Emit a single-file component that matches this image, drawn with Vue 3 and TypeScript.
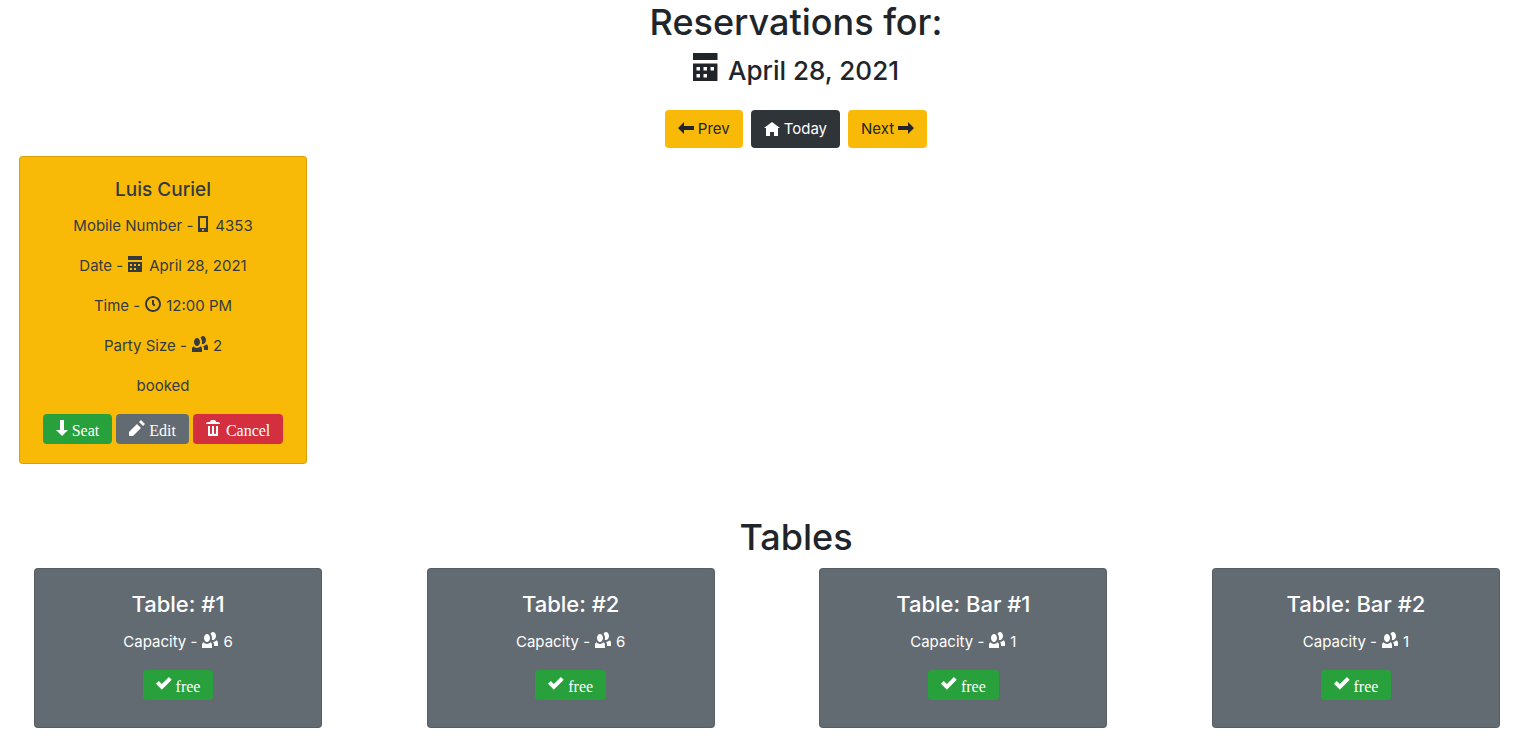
<script setup lang="ts">
import { defineComponent, h } from 'vue'

interface Glyph {
  width: number
  path: string
  dy?: number
}

const glyphs: Record<string, Glyph> = {
  calendar: {
    width: 8,
    path: 'M0 0v2h7v-2h-7zm0 3v4.91c0 .05.04.09.09.09h6.81c.05 0 .09-.04.09-.09v-4.91h-6.99zm1 1h1v1h-1v-1zm2 0h1v1h-1v-1zm2 0h1v1h-1v-1zm-4 2h1v1h-1v-1zm2 0h1v1h-1v-1z',
  },
  left: { width: 8, dy: 0.5, path: 'M3 0l-3 3.03 3 2.97v-2h5v-2h-5v-2z' },
  right: { width: 8, dy: 0.5, path: 'M5 0v2h-5v2h5v2l3-3.03-3-2.97z' },
  down: { width: 6, path: 'M2 0v5h-2l3.03 3 2.97-3h-2v-5h-2z' },
  home: { width: 8, dy: 0.5, path: 'M4 0l-4 3h1v4h2v-2h2v2h2v-4.03l1 .03-4-3z' },
  phone: {
    width: 6,
    path: 'M.19 0c-.11 0-.19.08-.19.19v7.63c0 .11.08.19.19.19h4.63c.11 0 .19-.08.19-.19v-7.63c0-.11-.08-.19-.19-.19h-4.63zm.81 1h3v5h-3v-5zm1.5 5.5c.28 0 .5.22.5.5s-.22.5-.5.5-.5-.22-.5-.5.22-.5.5-.5z',
  },
  clock: {
    width: 8,
    path: 'M4 0c-2.2 0-4 1.8-4 4s1.8 4 4 4 4-1.8 4-4-1.8-4-4-4zm0 1c1.66 0 3 1.34 3 3s-1.34 3-3 3-3-1.34-3-3 1.34-3 3-3zm-.5 1v2.22l.16.13.5.5.34.38.72-.72-.38-.34-.34-.34v-1.81h-1z',
  },
  people: {
    width: 8,
    path: 'M5.5 0c-.51 0-.95.35-1.22.88.45.54.72 1.28.72 2.13 0 .29-.03.55-.09.81.19.11.38.19.59.19.83 0 1.5-.9 1.5-2s-.67-2-1.5-2zm-3 1c-.83 0-1.5.9-1.5 2s.67 2 1.5 2 1.5-.9 1.5-2-.67-2-1.5-2zm4.75 3.16c-.43.51-1.02.82-1.69.84.27.38.44.84.44 1.34v.66h2v-1.66c0-.52-.31-.97-.75-1.19zm-6.5 1c-.44.22-.75.67-.75 1.19v1.66h5v-1.66c0-.52-.31-.97-.75-1.19-.45.53-1.06.84-1.75.84s-1.3-.32-1.75-.84z',
  },
  check: {
    width: 8,
    dy: 0.5,
    path: 'M6.41 0l-.69.72-2.78 2.78-.81-.78-.72-.72-1.41 1.41.72.72 1.5 1.5.69.72.72-.72 3.5-3.5.72-.72-1.44-1.41z',
  },
  pencil: { width: 8, path: 'M6 0l-1 1 2 2 1-1-2-2zm-2 2l-4 4v2h2l4-4-2-2z' },
  trash: {
    width: 8,
    path: 'M3 0c-.55 0-1 .45-1 1h-1c-.55 0-1 .45-1 1h7c0-.55-.45-1-1-1h-1c0-.55-.45-1-1-1h-1zm-2 3v4.81c0 .11.08.19.19.19h4.63c.11 0 .19-.08.19-.19v-4.81h-1v3.5c0 .28-.22.5-.5.5s-.5-.22-.5-.5v-3.5h-1v3.5c0 .28-.22.5-.5.5s-.5-.22-.5-.5v-3.5h-1z',
  },
}

const Icon = defineComponent({
  props: { name: { type: String, required: true }, size: { type: Number, default: 16 } },
  setup(props) {
    return () => {
      const g = glyphs[props.name]
      return h(
        'svg',
        {
          class: 'icon',
          viewBox: `0 0 ${g.width} 8`,
          width: (g.width * props.size) / 8,
          height: props.size,
          'aria-hidden': 'true',
        },
        [h('path', { d: g.path, fill: 'currentColor', transform: `translate(0 ${g.dy ?? 0})` })],
      )
    }
  },
})

const details = [
  { label: 'Mobile Number -', icon: 'phone', value: '4353' },
  { label: 'Date -', icon: 'calendar', value: 'April 28, 2021' },
  { label: 'Time -', icon: 'clock', value: '12:00 PM' },
  { label: 'Party Size -', icon: 'people', value: '2' },
]

const tables = [
  { name: '#1', capacity: 6 },
  { name: '#2', capacity: 6 },
  { name: 'Bar #1', capacity: 1 },
  { name: 'Bar #2', capacity: 1 },
]
</script>

<template>
  <main class="dashboard">
    <header class="heading">
      <h1>Reservations for:</h1>
      <h2 class="date"><Icon name="calendar" :size="28" /><span>April 28, 2021</span></h2>
      <nav class="pager">
        <button type="button" class="btn warning"><Icon name="left" />Prev</button>
        <button type="button" class="btn dark"><Icon name="home" />Today</button>
        <button type="button" class="btn warning">Next<Icon name="right" /></button>
      </nav>
    </header>

    <section class="reservations">
      <article class="card reservation">
        <h3>Luis Curiel</h3>
        <p v-for="d in details" :key="d.label" class="line">
          <span>{{ d.label }}</span><Icon :name="d.icon" /><span>{{ d.value }}</span>
        </p>
        <p class="line">booked</p>
        <div class="actions">
          <button type="button" class="btn small success"><Icon name="down" /><span>Seat</span></button>
          <button type="button" class="btn small secondary"><Icon name="pencil" /><span>Edit</span></button>
          <button type="button" class="btn small danger"><Icon name="trash" /><span>Cancel</span></button>
        </div>
      </article>
    </section>

    <h1 class="heading">Tables</h1>
    <section class="tables">
      <article v-for="t in tables" :key="t.name" class="card table-card">
        <h3>Table: {{ t.name }}</h3>
        <p class="line"><span>Capacity -</span><Icon name="people" /><span>{{ t.capacity }}</span></p>
        <div class="actions">
          <button type="button" class="btn small success"><Icon name="check" /><span>free</span></button>
        </div>
      </article>
    </section>
  </main>
</template>

<style>
body {
  margin: 0;
  background: #fff;
}
</style>

<style scoped>
.dashboard {
  padding: 0 19px;
  color: #212529;
  font-family: Inter, 'Liberation Sans', sans-serif;
  font-size: 15px;
  line-height: 24px;
}
h1,
h2,
h3,
p {
  margin: 0;
  font-weight: 500;
}
h1 {
  margin-bottom: 7px;
  font-size: 36px;
  line-height: 48px;
  text-align: center;
}
.heading {
  padding-left: 73px;
}
.heading h1 {
  margin: -2px 0 8px;
}
.date {
  display: flex;
  justify-content: center;
  gap: 7px;
  font-size: 26px;
  line-height: 34px;
}
:deep(.icon) {
  flex: none;
  display: block;
}
.date :deep(.icon) {
  margin-top: -1px;
}
.pager {
  display: flex;
  justify-content: center;
  gap: 8px;
  padding: 22px 0 8px;
}
.btn {
  display: flex;
  align-items: center;
  justify-content: center;
  gap: 4px;
  height: 38px;
  padding: 0 13px;
  border: 0;
  border-radius: 4px;
  font: 400 15px/24px Inter, 'Liberation Sans', sans-serif;
  cursor: pointer;
}
.warning {
  background: #f9ba07;
  color: #212529;
}
.dark {
  background: #2f3438;
  color: #fff;
}
.small {
  height: 30px;
  color: #fff;
  font-family: 'Liberation Serif', 'Times New Roman', serif;
  font-size: 16px;
}
.small span {
  padding-top: 4px;
}
.small :deep(.icon) {
  margin-bottom: 2px;
}
.success {
  background: #28a03c;
}
.secondary {
  background: #636b72;
}
.danger {
  background: #d42f3e;
}
.card {
  box-sizing: border-box;
  width: 288px;
  padding: 20px 20px 19px;
  border: 1px solid rgba(0, 0, 0, 0.13);
  border-radius: 4px;
  text-align: center;
}
.card h3 {
  margin-bottom: 10px;
}
.reservations {
  padding-bottom: 49px;
}
.reservation {
  background: #f9ba07;
  color: #343a40;
}
.reservation h3 {
  font-size: 19px;
  line-height: 26px;
}
.line {
  display: flex;
  justify-content: center;
  gap: 5px;
  margin-bottom: 14px;
  line-height: 26px;
  font-weight: 400;
}
.line :deep(.icon) {
  margin-top: 3px;
}
.actions {
  display: flex;
  justify-content: center;
  gap: 4px;
  padding-top: 1px;
}
.tables {
  display: flex;
  justify-content: space-between;
  padding-left: 15px;
}
.table-card {
  padding-bottom: 27px;
  background: #636b72;
  color: #fff;
}
.table-card h3 {
  font-size: 22px;
  line-height: 30px;
}
</style>
